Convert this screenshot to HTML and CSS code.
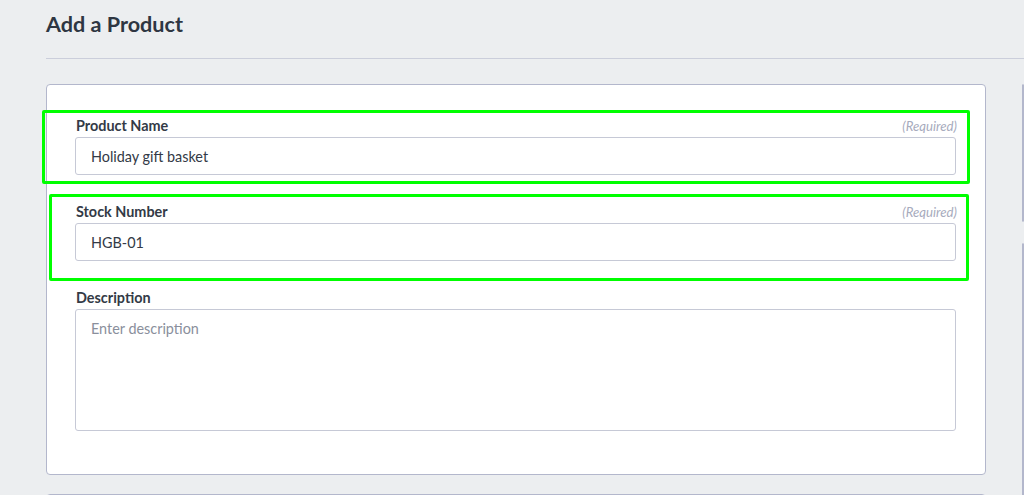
FILE: index.html
```html
<!DOCTYPE html>
<html>
<head>
<meta charset="utf-8">
<link rel="stylesheet" href="styles.css">
</head>
<body>
<div class="page">
  <header class="header">
    <h1 class="title">Add a Product</h1>
  </header>
  <div class="layout">
    <div class="main">
      <section class="card form-card">
        <div class="highlight hl-1"></div>
        <div class="highlight hl-2"></div>
        <div class="field">
          <div class="label-row">
            <label class="label">Product Name</label>
            <span class="required">(Required)</span>
          </div>
          <div class="input">Holiday gift basket</div>
        </div>
        <div class="field">
          <div class="label-row">
            <label class="label">Stock Number</label>
            <span class="required">(Required)</span>
          </div>
          <div class="input">HGB-01</div>
        </div>
        <div class="field last">
          <div class="label-row">
            <label class="label">Description</label>
          </div>
          <div class="textarea">Enter description</div>
        </div>
      </section>
      <section class="card next-card"></section>
    </div>
    <aside class="side">
      <section class="card side-card-1"></section>
      <section class="card side-card-2"></section>
    </aside>
  </div>
</div>
</body>
</html>
```

FILE: styles.css
```css
* { box-sizing: border-box; }
html, body { margin: 0; padding: 0; }
body {
  background: #eceef0;
  font-family: Lato, "Open Sans", sans-serif;
  color: #333a46;
}
.page {
  padding-left: 46px;
  height: 495px;
  overflow: hidden;
}
.header {
  padding-top: 10px;
  padding-bottom: 20px;
  border-bottom: 1px solid #cbcedb;
}
.title {
  margin: 0;
  font-size: 21.6px;
  line-height: 28px;
  font-weight: 700;
  color: #2e3642;
}
.layout {
  display: flex;
  gap: 36px;
  margin-top: 25px;
}
.main {
  width: 940px;
  flex: none;
  display: flex;
  flex-direction: column;
  gap: 19px;
}
.side {
  flex: 1;
  min-width: 0;
  display: flex;
  flex-direction: column;
  gap: 21px;
}
.card {
  background: #fff;
  border: 1px solid #b3b7cc;
  border-radius: 4px;
}
.form-card {
  position: relative;
  padding: 32px 29px 43px 28px;
}
.next-card { height: 60px; }
.side-card-1 { height: 138px; }
.side-card-2 { height: 260px; }
.field { margin-bottom: 28px; }
.field.last { margin-bottom: 0; }
.label-row {
  display: flex;
  justify-content: space-between;
  align-items: baseline;
  margin-bottom: 2px;
  padding-left: 1px;
}
.label {
  font-size: 14.4px;
  line-height: 18px;
  font-weight: 700;
  color: #333a46;
}
.required {
  font-size: 13.2px;
  line-height: 18px;
  font-style: italic;
  color: #a7abbd;
  margin-right: -1px;
}
.input {
  height: 38px;
  border: 1px solid #c6c9d6;
  border-radius: 3px;
  padding: 0 15px;
  font-size: 14.4px;
  line-height: 37px;
  color: #333a46;
}
.textarea {
  height: 122px;
  border: 1px solid #c6c9d6;
  border-radius: 3px;
  padding: 9px 15px;
  font-size: 14.4px;
  line-height: 20px;
  color: #8a8f9c;
}
.highlight {
  position: absolute;
  border: 3px solid #00ff00;
  border-radius: 2px;
  pointer-events: none;
}
.hl-1 { left: -5px; top: 25px; width: 928px; height: 74px; }
.hl-2 { left: 2px; top: 109px; width: 920px; height: 87px; }
```
